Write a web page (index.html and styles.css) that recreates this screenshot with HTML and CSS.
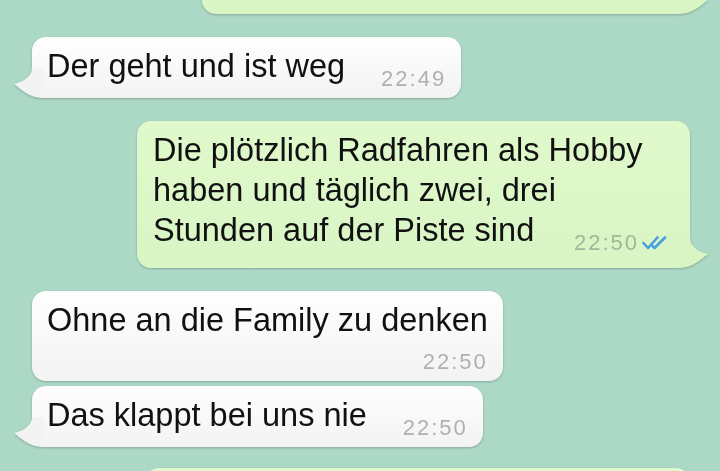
FILE: index.html
```html
<!DOCTYPE html>
<html lang="de">
<head>
  <meta charset="UTF-8">
  <title>Chat</title>
  <link rel="stylesheet" href="styles.css">
</head>
<body>

<div class="chat">
  <!-- oben angeschnitten -->
  <div class="msg out first">
    <span class="text">Kenne ich auch einige</span>
    <span class="time">22:48<svg class="ticks" viewBox="0 0 26 14"><path d="M1.5 7 L6 12 L15.5 1.5"/><path d="M10.5 10 L12.5 12 L23 1.5"/></svg></span>
    <svg class="tail" viewBox="0 0 30 30"><path d="M18 0 C18 8 10 14 0 16 C6 20 14 30 30 30 L30 0 Z"/></svg>
  </div>

  <div class="msg in">
    <span class="text">Der geht und ist weg</span>
    <span class="time">22:49</span>
    <svg class="tail" viewBox="0 0 30 30"><path d="M18 0 C18 8 10 14 0 16 C6 20 14 30 30 30 L30 0 Z"/></svg>
  </div>

  <div class="msg out">
    <span class="text">Die plötzlich Radfahren als Hobby haben und täglich zwei, drei Stunden auf der Piste sind</span>
    <span class="time">22:50<svg class="ticks" viewBox="0 0 26 14"><path d="M1.5 7 L6 12 L15.5 1.5"/><path d="M10.5 10 L12.5 12 L23 1.5"/></svg></span>
    <svg class="tail" viewBox="0 0 30 30"><path d="M18 0 C18 8 10 14 0 16 C6 20 14 30 30 30 L30 0 Z"/></svg>
  </div>

  <div class="msg in stacked">
    <span class="text">Ohne an die Family zu denken</span>
    <span class="time">22:50</span>
  </div>

  <div class="msg in cont">
    <span class="text">Das klappt bei uns nie</span>
    <span class="time">22:50</span>
    <svg class="tail" viewBox="0 0 30 30"><path d="M18 0 C18 8 10 14 0 16 C6 20 14 30 30 30 L30 0 Z"/></svg>
  </div>

  <!-- unten angeschnitten -->
  <div class="msg out last">
    <span class="text">Genau so ist das bei uns</span>
  </div>
</div>

</body>
</html>
```

FILE: styles.css
```css
body {
  margin: 0;
  height: 471px;
  overflow: hidden;
  background-color: #acd8c6;
  font-family: "Liberation Sans", Arial, sans-serif;
}
.chat {
  display: flex;
  flex-direction: column;
}
.msg {
  position: relative;
  box-sizing: border-box;
  margin-top: 23px;
  padding: 9px 15px 12px 15px;
  border-radius: 14px;
  font-size: 32.5px;
  line-height: 40px;
  color: #111111;
  filter: drop-shadow(0 1px 1px rgba(0, 0, 0, 0.22));
}
.msg.first {
  margin-top: -53px;
}
.msg.cont {
  margin-top: 5px;
}
.msg.last {
  margin-top: 21px;
  width: 545px;
}
.in {
  align-self: flex-start;
  margin-left: 32px;
  max-width: 476px;
  background: linear-gradient(#fefefe, #f3f3f3);
}
.out {
  align-self: flex-end;
  margin-right: 30px;
  max-width: 553px;
  padding-left: 16px;
  padding-right: 22px;
  padding-bottom: 18px;
  background: linear-gradient(#e0f9cc, #d9f5c4);
}
.time {
  float: right;
  margin: 23px 0 -4px 36px;
  font-size: 22px;
  line-height: 20px;
  letter-spacing: 2px;
  color: #b0b0b0;
}
.out .time {
  color: #9fb89b;
}
.stacked .time {
  float: none;
  display: block;
  text-align: right;
  margin: 12px 0 -3px 0;
}
.ticks {
  width: 26px;
  height: 14px;
  margin-left: 3px;
  fill: none;
  stroke: #4b9fe1;
  stroke-width: 2.6;
  stroke-linecap: round;
  stroke-linejoin: round;
}
.tail {
  position: absolute;
  bottom: 0;
  width: 30px;
  height: 30px;
}
.in .tail {
  left: -18px;
  fill: #f3f3f3;
}
.out .tail {
  right: -18px;
  transform: scaleX(-1);
  fill: #d9f5c4;
}
```
